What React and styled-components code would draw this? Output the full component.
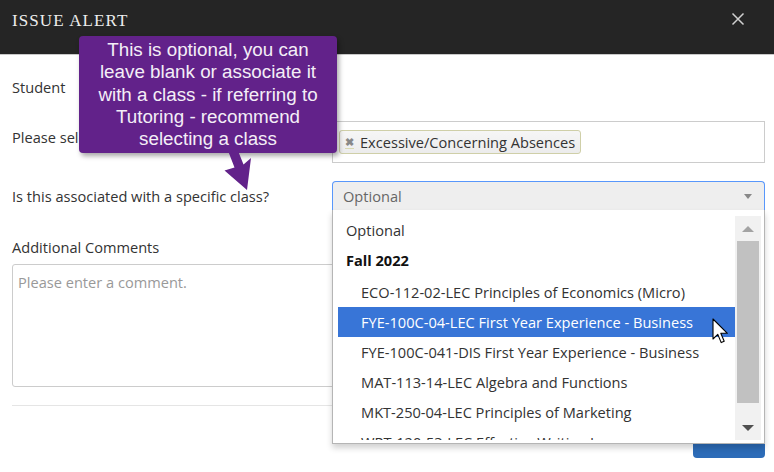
import React from "react";
import styled, { createGlobalStyle } from "styled-components";

const Global = createGlobalStyle`
  html, body { margin: 0; padding: 0; background: #fff; }
  body { font-family: "Open Sans", "Liberation Sans", sans-serif; }
  * { box-sizing: border-box; }
`;

const Modal = styled.div`
  position: relative;
  width: 774px;
  height: 472px;
  overflow: hidden;
  background: #fff;
`;

const Header = styled.div`
  height: 55px;
  background: #252525;
  border-bottom: 1px solid #c8c8c8;
  display: flex;
  align-items: flex-start;
  justify-content: space-between;
  padding: 9px 29px 0 12px;
`;

const Title = styled.h1`
  margin: 0;
  font-family: "Liberation Serif", "DejaVu Serif", serif;
  font-weight: normal;
  font-size: 17px;
  line-height: 24px;
  letter-spacing: 1.1px;
  color: #eeeeee;
`;

const Close = styled.span`
  display: flex;
  margin-top: 3px;
`;

const Body = styled.div`
  padding: 15px 9px 0 12px;
  display: flex;
  flex-direction: column;
`;

const Row = styled.div`
  display: grid;
  grid-template-columns: 320px 1fr;
  align-items: start;
  margin-bottom: ${(p) => p.$mb || 0}px;
`;

const Label = styled.div`
  font-size: 14.6px;
  line-height: 20px;
  color: #333;
  padding-top: ${(p) => p.$pt || 0}px;
  min-height: ${(p) => p.$h || 20}px;
`;

const MultiBox = styled.div`
  height: 42px;
  border: 1px solid #cccccc;
  padding: 8px 6px;
  display: flex;
  align-items: flex-start;
`;

const Tag = styled.div`
  display: flex;
  align-items: center;
  height: 24px;
  padding: 0 5px 0 5px;
  border: 1px solid #cfcfa8;
  border-radius: 3px;
  background: linear-gradient(#f6f6f6, #ececec);
  font-size: 14.6px;
  color: #333;
`;

const TagX = styled.span`
  font-family: "Liberation Sans", sans-serif;
  font-weight: bold;
  font-size: 11px;
  color: #888;
  margin-right: 6px;
  border-bottom: 1px solid #d8d8b0;
  line-height: 12px;
`;

const SelectWrap = styled.div`
  position: relative;
`;

const SelectBox = styled.div`
  height: 29px;
  background: #eeeeee;
  border: 1px solid #5897fb;
  border-bottom: none;
  border-radius: 4px 4px 0 0;
  display: flex;
  align-items: center;
  justify-content: space-between;
  padding: 0 12px 0 10px;
  font-size: 14.6px;
  color: #666;
`;

const Caret = styled.span`
  width: 0;
  height: 0;
  border-left: 4px solid transparent;
  border-right: 4px solid transparent;
  border-top: 5px solid #888;
`;

const Dropdown = styled.div`
  position: absolute;
  top: 100%;
  left: 0;
  width: 100%;
  height: 234px;
  background: #fff;
  border: 1px solid #b5b5b5;
  border-top: none;
  box-shadow: 0 4px 6px rgba(0, 0, 0, 0.18);
  display: flex;
  padding: 5px 3px 3px 5px;
  z-index: 5;
`;

const List = styled.ul`
  flex: 1;
  list-style: none;
  margin: 0;
  padding: 0;
  overflow: hidden;
`;

const Option = styled.li`
  height: 30px;
  display: flex;
  align-items: center;
  padding-left: ${(p) => (p.$sub ? 23 : 8)}px;
  font-size: 14.6px;
  font-weight: ${(p) => (p.$group ? 700 : 400)};
  white-space: nowrap;
  color: ${(p) => (p.$active ? "#fff" : p.$group ? "#111" : "#333")};
  background: ${(p) => (p.$active ? "#3875d7" : "transparent")};
  margin-top: ${(p) => p.$mt || 0}px;
`;

const Scrollbar = styled.div`
  width: 26px;
  background: #f1f1f1;
  display: flex;
  flex-direction: column;
  margin-top: 1px;
`;

const ScrollBtn = styled.div`
  height: ${(p) => p.$h}px;
  display: flex;
  align-items: ${(p) => (p.$down ? "flex-end" : "center")};
  padding-bottom: ${(p) => (p.$down ? 9 : 0)}px;
  justify-content: center;
`;

const ArrowUp = styled.span`
  width: 0;
  height: 0;
  border-left: 6px solid transparent;
  border-right: 6px solid transparent;
  border-bottom: 6px solid #a3a3a3;
`;

const ArrowDown = styled.span`
  width: 0;
  height: 0;
  border-left: 6px solid transparent;
  border-right: 6px solid transparent;
  border-top: 6px solid #505050;
`;

const Thumb = styled.div`
  height: 162px;
  margin: 0 2px;
  background: #c1c1c1;
`;

const CommentLabel = styled(Label)`
  margin-bottom: 7px;
`;

const TextArea = styled.textarea`
  display: block;
  width: 100%;
  height: 123px;
  border: 1px solid #cccccc;
  border-radius: 3px;
  padding: 7px 5px;
  font-family: "Open Sans", "Liberation Sans", sans-serif;
  font-size: 14.6px;
  line-height: 20px;
  resize: none;
  outline: none;
  &::placeholder { color: #999; }
`;

const Divider = styled.hr`
  border: none;
  border-top: 1px solid #e5e5e5;
  margin: 18px 0 14px;
`;

const Footer = styled.div`
  display: flex;
  justify-content: flex-end;
`;

const Button = styled.button`
  width: 72px;
  height: 38px;
  border: none;
  border-radius: 4px;
  background: #2d6cb8;
  color: #fff;
  font-family: "Open Sans", "Liberation Sans", sans-serif;
  font-size: 14px;
  padding: 0 0 6px;
`;

const Tooltip = styled.div`
  position: absolute;
  left: 79px;
  top: 36px;
  width: 258px;
  height: 117px;
  background: #62228a;
  border-radius: 4px;
  box-shadow: 2px 3px 5px rgba(0, 0, 0, 0.35);
  color: #f4eef7;
  font-family: "Liberation Sans", Arial, sans-serif;
  font-size: 18.8px;
  line-height: 22.3px;
  text-align: center;
  padding-top: 3px;
  white-space: nowrap;
  z-index: 10;
`;

const Pointer = styled.svg`
  position: absolute;
  left: 220px;
  top: 150px;
  z-index: 11;
`;

const Cursor = styled.svg`
  position: absolute;
  left: 712px;
  top: 318px;
  z-index: 12;
`;

const groups = [
  "ECO-112-02-LEC Principles of Economics (Micro)",
  "FYE-100C-04-LEC First Year Experience - Business",
  "FYE-100C-041-DIS First Year Experience - Business",
  "MAT-113-14-LEC Algebra and Functions",
  "MKT-250-04-LEC Principles of Marketing",
  "WRT-120-53-LEC Effective Writing I",
];

export default function App() {
  return (
    <Modal>
      <Global />
      <Header>
        <Title>ISSUE ALERT</Title>
        <Close>
          <svg width="14" height="14" viewBox="0 0 14 14">
            <path d="M1.5 1.5L12.5 12.5M12.5 1.5L1.5 12.5" stroke="#d0d0d0" strokeWidth="1.5" />
          </svg>
        </Close>
      </Header>
      <Body>
        <Row $mb={17}>
          <Label $pt={7} $h={34}>Student</Label>
          <div />
        </Row>
        <Row $mb={18}>
          <Label $pt={6}>Please select</Label>
          <MultiBox>
            <Tag>
              <TagX>✖</TagX>
              Excessive/Concerning Absences
            </Tag>
          </MultiBox>
        </Row>
        <Row $mb={27}>
          <Label $pt={5}>Is this associated with a specific class?</Label>
          <SelectWrap>
            <SelectBox>
              Optional
              <Caret />
            </SelectBox>
            <Dropdown>
              <List>
                <Option>Optional</Option>
                <Option $group>Fall 2022</Option>
                {groups.map((g, i) => (
                  <Option key={g} $sub $active={i === 1} $mt={i === 0 ? 2 : 0}>
                    {g}
                  </Option>
                ))}
              </List>
              <Scrollbar>
                <ScrollBtn $h={25}>
                  <ArrowUp />
                </ScrollBtn>
                <Thumb />
                <ScrollBtn $h={37} $down>
                  <ArrowDown />
                </ScrollBtn>
              </Scrollbar>
            </Dropdown>
          </SelectWrap>
        </Row>
        <CommentLabel>Additional Comments</CommentLabel>
        <TextArea placeholder="Please enter a comment." readOnly />
        <Divider />
        <Footer>
          <Button>Save</Button>
        </Footer>
      </Body>
      <Tooltip>
        This is optional, you can
        <br />
        leave blank or associate it
        <br />
        with a class - if referring to
        <br />
        Tutoring - recommend
        <br />
        selecting a class
      </Tooltip>
      <Pointer width="40" height="44" viewBox="220 150 40 44">
        <polygon
          points="228.5,152 238.5,152 243.5,164.5 251,158 247,190 224.5,170.5 234.5,167.5"
          fill="#62228a"
        />
      </Pointer>
      <Cursor width="20" height="28" viewBox="0 0 20 28">
        <path
          d="M1 1 L1 21 L5.8 16.4 L9.2 24.6 L12.2 23.3 L8.8 15.3 L15.4 15.3 Z"
          fill="#fff"
          stroke="#000"
          strokeWidth="1.1"
          strokeLinejoin="round"
        />
      </Cursor>
    </Modal>
  );
}
